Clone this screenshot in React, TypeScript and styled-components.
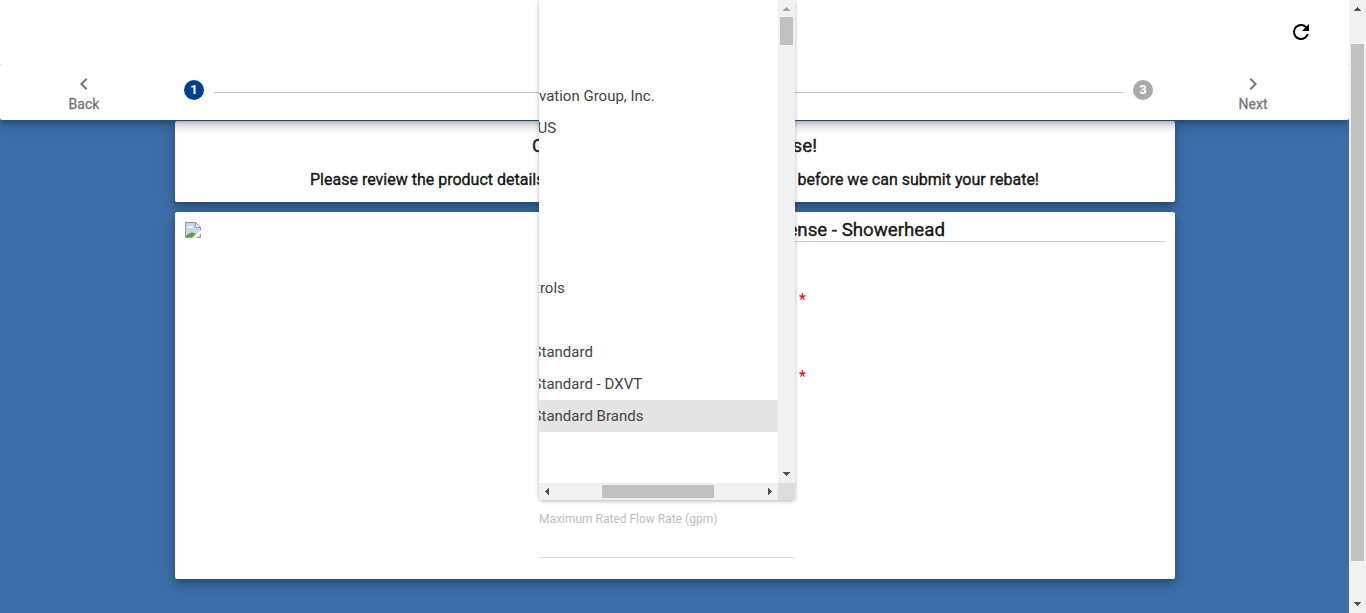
import React from "react";
import styled, { createGlobalStyle } from "styled-components";

const GlobalStyle = createGlobalStyle`
  * { box-sizing: border-box; }
  body { margin: 0; overflow: hidden; font-family: Roboto, "Liberation Sans", sans-serif; color: rgba(0, 0, 0, 0.87); }
  p, h1, h2 { margin: 0; }
`;

const Page = styled.div`
  position: relative;
  display: flex;
  width: 1366px;
  height: 613px;
  overflow: hidden;
`;

const Main = styled.main`
  flex: 1;
  display: flex;
  flex-direction: column;
  background: #3b6ea8;
  overflow: hidden;
`;

const Header = styled.header`
  position: relative;
  z-index: 1;
  flex: none;
  height: 120px;
  border-radius: 2px;
  box-shadow: 0 3px 5px -1px rgba(0, 0, 0, 0.2), 0 6px 10px rgba(0, 0, 0, 0.14), 0 1px 18px rgba(0, 0, 0, 0.12);
`;

const TopBar = styled.div`
  display: flex;
  justify-content: flex-end;
  height: 65px;
  padding: 20px 36px 0 0;
  background: #fff;
  border-radius: 0 0 1px 1px;
  color: #000;
`;

const Stepper = styled.nav`
  display: flex;
  height: 55px;
  background: #fff;
  border-radius: 0 0 2px 2px;
`;

const NavButton = styled.button<{ $width: number; $indent?: number }>`
  display: flex;
  flex: none;
  flex-direction: column;
  align-items: center;
  width: ${(p) => p.$width}px;
  height: 55px;
  padding: 7px 0 0 ${(p) => p.$indent ?? 0}px;
  border: 0;
  background: none;
  font: 400 14px/20px Roboto, sans-serif;
  -webkit-text-stroke: 0.3px currentColor;
  color: #757575;
  svg { display: block; margin-bottom: -2px; }
`;

const Steps = styled.div`
  flex: none;
  width: 985px;
  display: flex;
  gap: 10px;
  padding: 15px 0 0 16px;
`;

const Step = styled.span<{ $active?: boolean }>`
  width: 20px;
  height: 20px;
  border-radius: 50%;
  background: ${(p) => (p.$active ? "#003f8f" : "#a9a9a9")};
  color: #fff;
  font-size: 13px;
  font-weight: 700;
  line-height: 20px;
  text-align: center;
`;

const StepLine = styled.span`
  flex: 1;
  height: 1px;
  margin-top: 12px;
  background: #bdbdbd;
`;

const Content = styled.div`
  display: flex;
  flex-direction: column;
  gap: 10px;
  width: 1000px;
  margin: 1px 0 0 175px;
`;

const Card = styled.section<{ $height: number }>`
  display: flex;
  height: ${(p) => p.$height}px;
  background: #fff;
  border-radius: 2px;
  box-shadow: 0 3px 5px -1px rgba(0, 0, 0, 0.2), 0 6px 10px rgba(0, 0, 0, 0.14), 0 1px 18px rgba(0, 0, 0, 0.12);
`;

const Intro = styled(Card)`
  flex-direction: column;
  align-items: center;
  padding: 13px 1px 0 0;
`;

const SplitLine = styled.p<{ $width: number; $size: number }>`
  display: flex;
  justify-content: space-between;
  width: ${(p) => p.$width}px;
  height: 34px;
  font-size: ${(p) => p.$size}px;
  font-weight: 400;
  -webkit-text-stroke: 0.45px currentColor;
  line-height: 24px;
  white-space: nowrap;
`;

const Product = styled(Card)`
  padding: 10px;
`;

const ImageSlot = styled.div`
  width: 354px;
  svg { display: block; }
`;

const Details = styled.div`
  flex: 1;
  display: flex;
  flex-direction: column;
`;

const Title = styled.h2`
  height: 20px;
  padding-right: 220px;
  border-bottom: 1px solid #cfcfcf;
  font-size: 18.72px;
  font-weight: 400;
  -webkit-text-stroke: 0.45px currentColor;
  line-height: 16px;
  text-align: right;
`;

const Required = styled.span<{ $top: number }>`
  margin: ${(p) => p.$top}px 0 0 260px;
  height: 20px;
  color: #f00;
  font-size: 16px;
  line-height: 20px;
`;

const Field = styled.div`
  width: 256px;
  height: 49px;
  margin-top: 122px;
  border-bottom: 1px solid #e0e0e0;
  color: #bdbdbd;
  font-size: 12px;
  line-height: 20px;
`;

const Menu = styled.div`
  position: absolute;
  z-index: 2;
  top: 0;
  left: 539px;
  display: grid;
  grid-template: 483px 17px / 239px 17px;
  background: #fff;
  border-radius: 0 0 4px 4px;
  box-shadow: 0 1px 4px rgba(0, 0, 0, 0.3);
`;

const Corner = styled.span`
  background: #dcdcdc;
  border-radius: 0 0 4px 0;
`;

const Options = styled.div`
  padding-top: 16px;
  overflow: hidden;
`;

const Option = styled.div<{ $shift: number; $selected?: boolean }>`
  height: 32px;
  background: ${(p) => (p.$selected ? "#e4e4e4" : "#fff")};
  color: #444;
  font-size: 15px;
  font-weight: 400;
  line-height: 32px;
  white-space: nowrap;
  span { display: inline-block; margin-left: ${(p) => p.$shift}px; }
`;

const Track = styled.div<{ $horizontal?: boolean }>`
  display: flex;
  flex: none;
  flex-direction: ${(p) => (p.$horizontal ? "row" : "column")};
  width: ${(p) => (p.$horizontal ? "239px" : "17px")};
  align-items: center;
  background: #f1f1f1;
  svg { flex: none; display: block; }
`;

const Thumb = styled.span<{ $before: number; $length: number; $horizontal?: boolean }>`
  flex: none;
  width: ${(p) => (p.$horizontal ? p.$length : 13)}px;
  height: ${(p) => (p.$horizontal ? 13 : p.$length)}px;
  margin: ${(p) => (p.$horizontal ? `0 auto 0 ${p.$before}px` : `${p.$before}px 0 auto`)};
  background: #c1c1c1;
`;

const ARROWS = {
  up: "M5 11h7v-1h-1v-1h-1v-1h-1v-1h-1v1h-1v1h-1v1h-1z",
  down: "M5 6h7v1h-1v1h-1v1h-1v1h-1v-1h-1v-1h-1v-1h-1z",
  left: "M10 5v7h-1v-1h-1v-1h-1v-1h-1v-1h1v-1h1v-1h1v-1z",
  right: "M7 5v7h1v-1h1v-1h1v-1h1v-1h-1v-1h-1v-1h-1v-1z",
};

const Arrow = ({ dir, color = "#505050" }: { dir: keyof typeof ARROWS; color?: string }) => (
  <svg width="17" height="17" viewBox="0 0 17 17" shapeRendering="crispEdges">
    <path d={ARROWS[dir]} fill={color} />
  </svg>
);

const Icon = ({ d, size }: { d: string; size: number }) => (
  <svg width={size} height={size} viewBox="0 0 24 24" fill="currentColor">
    <path d={d} />
  </svg>
);

const BrokenImage = () => (
  <svg width="16" height="16" viewBox="0 0 16 16">
    <path d="M0.5 0.5h10l5 5v10h-15z" fill="#c3d5f5" stroke="#999" />
    <path d="M2 6q1-2 2.500-1 1.500-2 3 0 1 0 1 1h-6.500z" fill="#fff" />
    <path d="M1 15v-1q5-6 10-2l-3 3z" fill="#4eab32" />
    <path d="M10.500 0.500v5h5z" fill="#fff" stroke="#999" />
    <path d="M7 16l9-8v3l-5 5z" fill="#fff" />
  </svg>
);

const OPTIONS: { text: string; shift: number; selected?: boolean }[] = [
  { text: "", shift: 0 },
  { text: "", shift: 0 },
  { text: "vation Group, Inc.", shift: 0 },
  { text: "US", shift: -1.5 },
  { text: "", shift: 0 },
  { text: "", shift: 0 },
  { text: "", shift: 0 },
  { text: "", shift: 0 },
  { text: "trols", shift: -4 },
  { text: "", shift: 0 },
  { text: "Standard", shift: -6.4 },
  { text: "Standard - DXVT", shift: -6.4 },
  { text: "Standard Brands", shift: -6.4, selected: true },
];

export default function App() {
  return (
    <Page>
      <GlobalStyle />
      <Main>
        <Header>
          <TopBar>
            <Icon size={24} d="M17.650 6.350A7.958 7.958 0 0 0 12 4a8 8 0 1 0 7.730 10h-2.080A6 6 0 1 1 12 6c1.660 0 3.140.69 4.220 1.780L13 11h7V4z" />
          </TopBar>
          <Stepper>
            <NavButton $width={168}>
              <Icon size={24} d="M15.410 7.410 14 6l-6 6 6 6 1.410-1.410L10.830 12z" />
              Back
            </NavButton>
            <Steps>
              <Step $active>1</Step>
              <StepLine />
              <Step>3</Step>
            </Steps>
            <NavButton $width={196} $indent={4}>
              <Icon size={24} d="M10 6 8.590 7.410 13.170 12l-4.580 4.590L10 18l6-6z" />
              Next
            </NavButton>
          </Stepper>
        </Header>
        <Content>
          <Intro $height={81}>
            <SplitLine $width={285} $size={18.72}><span>C</span><span>se!</span></SplitLine>
            <SplitLine $width={729} $size={16}>
              <span>Please review the product details</span>
              <span>before we can submit your rebate!</span>
            </SplitLine>
          </Intro>
          <Product $height={367}>
            <ImageSlot><BrokenImage /></ImageSlot>
            <Details>
              <Title>WaterSense - Showerhead</Title>
              <Required $top={48}>*</Required>
              <Required $top={57}>*</Required>
              <Field>Maximum Rated Flow Rate (gpm)</Field>
            </Details>
          </Product>
        </Content>
      </Main>
      <Track>
        <Arrow dir="up" />
        <Thumb $before={27} $length={517} />
        <Arrow dir="down" />
      </Track>
      <Menu>
        <Options>
          {OPTIONS.map((o, i) => (
            <Option key={i} $shift={o.shift} $selected={o.selected}>
              {o.text && <span>{o.text}</span>}
            </Option>
          ))}
        </Options>
        <Track>
          <Arrow dir="up" color="#a3a3a3" />
          <Thumb $before={0} $length={28} />
          <Arrow dir="down" />
        </Track>
        <Track $horizontal>
          <Arrow dir="left" />
          <Thumb $horizontal $before={46} $length={112} />
          <Arrow dir="right" />
        </Track>
        <Corner />
      </Menu>
    </Page>
  );
}
